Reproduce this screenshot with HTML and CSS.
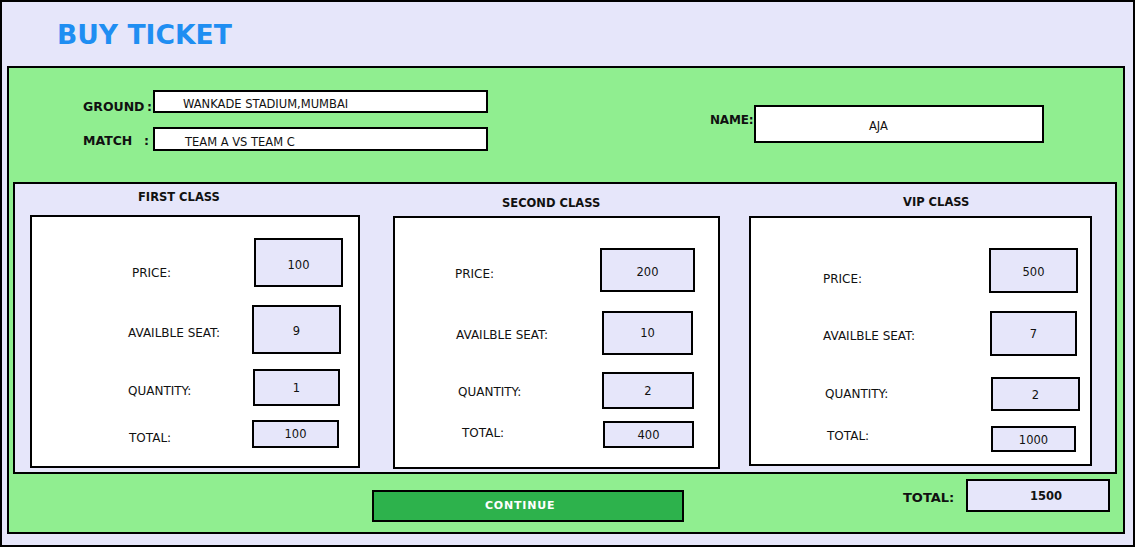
FILE: index.html
```html
<!DOCTYPE html>
<html lang="en">
<head>
<meta charset="utf-8">
<title>Buy Ticket</title>
<link rel="stylesheet" href="styles.css">
</head>
<body>
<div class="frame">
  <header class="header"><h1 class="title">BUY TICKET</h1></header>
  <main class="panel">
    <section class="top">
      <div class="venue">
        <div class="frow ground">
          <span class="flabel"><span>GROUND</span><span class="colon">:</span></span>
          <div class="field">WANKADE STADIUM,MUMBAI</div>
        </div>
        <div class="frow match">
          <span class="flabel"><span>MATCH</span><span class="colon">:</span></span>
          <div class="field">TEAM A VS TEAM C</div>
        </div>
      </div>
      <div class="name">
        <span class="name-label">NAME:</span>
        <div class="field name-field">AJA</div>
      </div>
    </section>

    <section class="classes">
      <div class="col c1">
        <h2 class="ctitle">FIRST CLASS</h2>
        <div class="card">
          <div class="row r-price"><span class="lbl">PRICE:</span><div class="val">100</div></div>
          <div class="row r-seat"><span class="lbl">AVAILBLE SEAT:</span><div class="val">9</div></div>
          <div class="row r-qty"><span class="lbl">QUANTITY:</span><div class="val">1</div></div>
          <div class="row r-total"><span class="lbl">TOTAL:</span><div class="val">100</div></div>
        </div>
      </div>
      <div class="col c2">
        <h2 class="ctitle">SECOND CLASS</h2>
        <div class="card">
          <div class="row r-price"><span class="lbl">PRICE:</span><div class="val">200</div></div>
          <div class="row r-seat"><span class="lbl">AVAILBLE SEAT:</span><div class="val">10</div></div>
          <div class="row r-qty"><span class="lbl">QUANTITY:</span><div class="val">2</div></div>
          <div class="row r-total"><span class="lbl">TOTAL:</span><div class="val">400</div></div>
        </div>
      </div>
      <div class="col c3">
        <h2 class="ctitle">VIP CLASS</h2>
        <div class="card">
          <div class="row r-price"><span class="lbl">PRICE:</span><div class="val">500</div></div>
          <div class="row r-seat"><span class="lbl">AVAILBLE SEAT:</span><div class="val">7</div></div>
          <div class="row r-qty"><span class="lbl">QUANTITY:</span><div class="val">2</div></div>
          <div class="row r-total"><span class="lbl">TOTAL:</span><div class="val">1000</div></div>
        </div>
      </div>
    </section>

    <section class="foot">
      <button class="continue" type="button">CONTINUE</button>
      <span class="grand-label">TOTAL:</span>
      <div class="grand-val">1500</div>
    </section>
  </main>
</div>
</body>
</html>
```

FILE: styles.css
```css
* { box-sizing: border-box; }
html, body { margin: 0; padding: 0; background: #ffffff; }
body { font-family: "DejaVu Sans", "Liberation Sans", sans-serif; color: #111; }

.frame {
  width: 1135px;
  height: 547px;
  border: 2px solid #000;
  background: #e6e6fa;
}

.header {
  height: 64px;
  display: flex;
  align-items: center;
  padding-left: 55px;
}
.title {
  margin: 0;
  font-size: 26.6px;
  line-height: 27px;
  font-weight: bold;
  color: #1f8ef2;
}

.panel {
  margin-left: 5px;
  width: 1118px;
  height: 468px;
  border: 2px solid #000;
  background: #90ee90;
}

/* top fields */
.top {
  height: 114px;
  display: flex;
  padding-left: 74px;
}
.venue { padding-top: 22px; }
.frow { display: flex; align-items: flex-start; }
.frow.match { margin-top: 13px; }
.flabel {
  width: 70px;
  display: flex;
  justify-content: space-between;
  padding-right: 1px;
  font-weight: bold;
  font-size: 12.5px;
  line-height: 15px;
  padding-top: 9px;
}
.frow.match .flabel { padding-top: 6px; padding-right: 4px; }
.field {
  width: 335px;
  height: 23px;
  border: 2px solid #000;
  background: #fff;
  font-size: 11.5px;
  line-height: 14px;
  padding-top: 5px;
  padding-left: 28px;
}
.frow.match .field { height: 24px; padding-left: 30px; padding-top: 6px; }

.name {
  margin-left: 222px;
  padding-top: 37px;
  display: flex;
  align-items: flex-start;
}
.name-label {
  width: 44px;
  font-weight: bold;
  font-size: 12px;
  line-height: 15px;
  padding-top: 8px;
  letter-spacing: -0.2px;
  white-space: nowrap;
}
.name-field {
  width: 290px;
  height: 38px;
  padding-left: 113px;
  padding-top: 12px;
}

/* classes */
.classes {
  margin-left: 4px;
  width: 1104px;
  height: 292px;
  border: 2px solid #000;
  background: #e6e6fa;
  display: flex;
  padding-left: 15px;
}
.col { display: flex; flex-direction: column; }
.ctitle {
  margin: 0;
  font-size: 11.5px;
  line-height: 14px;
  font-weight: bold;
  white-space: nowrap;
}
.c1 { width: 330px; }
.c1 .ctitle { height: 31px; padding-top: 6px; padding-left: 108px; }
.c2 { width: 327px; margin-left: 33px; }
.c2 .ctitle { height: 32px; padding-top: 12px; padding-left: 109px; }
.c3 { width: 343px; margin-left: 29px; }
.c3 .ctitle { height: 32px; padding-top: 11px; padding-left: 154px; }

.card {
  border: 2px solid #000;
  background: #fff;
  height: 253px;
}
.c3 .card { height: 250px; }

.row { display: flex; align-items: flex-start; }
.lbl {
  font-size: 12px;
  line-height: 14px;
  white-space: nowrap;
  flex: none;
}
.val {
  flex: none;
  border: 2px solid #000;
  background: #e6e6fa;
  display: flex;
  align-items: center;
  justify-content: center;
  font-size: 11.5px;
  line-height: 14px;
  padding-top: 1px;
}

/* first class */
.c1 .r-price { margin-top: 21px; padding-left: 100px; }
.c1 .r-price .lbl { width: 122px; padding-top: 27.5px; }
.c1 .r-price .val { width: 89px; height: 49px; padding-top: 4px; }
.c1 .r-seat { margin-top: 18px; padding-left: 96px; }
.c1 .r-seat .lbl { width: 124px; padding-top: 21px; }
.c1 .r-seat .val { width: 89px; height: 49px; padding-top: 3px; }
.c1 .r-qty { margin-top: 15px; padding-left: 96px; }
.c1 .r-qty .lbl { width: 125px; padding-top: 15px; }
.c1 .r-qty .val { width: 87px; height: 37px; padding-top: 0; }
.c1 .r-total { margin-top: 14px; padding-left: 97px; }
.c1 .r-total .lbl { width: 123px; padding-top: 11px; }
.c1 .r-total .val { width: 87px; height: 28px; padding-top: 0; }

/* second class */
.c2 .r-price { margin-top: 30px; padding-left: 60px; }
.c2 .r-price .lbl { width: 145px; padding-top: 18.5px; }
.c2 .r-price .val { width: 95px; height: 44px; padding-top: 3px; }
.c2 .r-seat { margin-top: 19px; padding-left: 61px; }
.c2 .r-seat .lbl { width: 146px; padding-top: 17px; }
.c2 .r-seat .val { width: 91px; height: 44px; padding-top: 0; }
.c2 .r-qty { margin-top: 17px; padding-left: 63px; }
.c2 .r-qty .lbl { width: 144px; padding-top: 12.5px; }
.c2 .r-qty .val { width: 92px; height: 37px; }
.c2 .r-total { margin-top: 12px; padding-left: 67px; }
.c2 .r-total .lbl { width: 141px; padding-top: 5px; }
.c2 .r-total .val { width: 91px; height: 27px; }

/* vip class */
.c3 .r-price { margin-top: 30px; padding-left: 72px; }
.c3 .r-price .lbl { width: 166px; padding-top: 24px; }
.c3 .r-price .val { width: 89px; height: 45px; padding-top: 3px; }
.c3 .r-seat { margin-top: 18px; padding-left: 72px; }
.c3 .r-seat .lbl { width: 167px; padding-top: 18px; }
.c3 .r-seat .val { width: 87px; height: 45px; }
.c3 .r-qty { margin-top: 21px; padding-left: 74px; }
.c3 .r-qty .lbl { width: 166px; padding-top: 10px; }
.c3 .r-qty .val { width: 89px; height: 34px; padding-top: 2px; }
.c3 .r-total { margin-top: 15px; padding-left: 76px; }
.c3 .r-total .lbl { width: 164px; padding-top: 2.5px; }
.c3 .r-total .val { width: 85px; height: 26px; }

/* footer */
.foot {
  height: 58px;
  display: flex;
  align-items: flex-start;
}
.continue {
  margin: 16px 0 0 363px;
  width: 312px;
  height: 32px;
  border: 2px solid #000;
  background: #2db24c;
  color: #fff;
  font-family: "DejaVu Sans", sans-serif;
  font-weight: bold;
  font-size: 11px;
  letter-spacing: 0.8px;
  text-align: left;
  padding: 0 0 0 111px;
  line-height: 14px;
  cursor: pointer;
}
.grand-label {
  margin: 16px 0 0 219px;
  width: 63px;
  font-weight: bold;
  font-size: 13px;
  line-height: 16px;
}
.grand-val {
  margin-top: 5px;
  width: 144px;
  height: 33px;
  border: 2px solid #000;
  background: #e6e6fa;
  display: flex;
  align-items: center;
  justify-content: center;
  padding-left: 16px;
  font-weight: bold;
  font-size: 11.5px;
  line-height: 14px;
}
```
